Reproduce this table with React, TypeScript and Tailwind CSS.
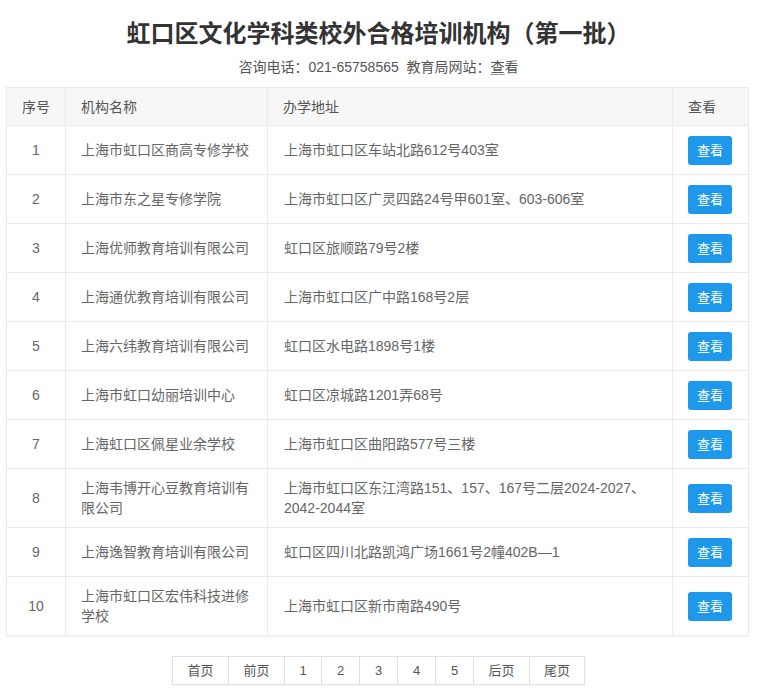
import React from "react";

const rows: { n: string; name: React.ReactNode; addr: React.ReactNode }[] = [
  { n: "1", name: "上海市虹口区商高专修学校", addr: "上海市虹口区车站北路612号403室" },
  { n: "2", name: "上海市东之星专修学院", addr: "上海市虹口区广灵四路24号甲601室、603-606室" },
  { n: "3", name: "上海优师教育培训有限公司", addr: "虹口区旅顺路79号2楼" },
  { n: "4", name: "上海通优教育培训有限公司", addr: "上海市虹口区广中路168号2层" },
  { n: "5", name: "上海六纬教育培训有限公司", addr: "虹口区水电路1898号1楼" },
  { n: "6", name: "上海市虹口幼丽培训中心", addr: "虹口区凉城路1201弄68号" },
  { n: "7", name: "上海虹口区佩星业余学校", addr: "上海市虹口区曲阳路577号三楼" },
  {
    n: "8",
    name: (
      <>
        上海韦博开心豆教育培训有
        <br />
        限公司
      </>
    ),
    addr: (
      <>
        上海市虹口区东江湾路151、157、167号二层2024-2027、
        <br />
        2042-2044室
      </>
    ),
  },
  { n: "9", name: "上海逸智教育培训有限公司", addr: "虹口区四川北路凯鸿广场1661号2幢402B—1" },
  {
    n: "10",
    name: (
      <>
        上海市虹口区宏伟科技进修
        <br />
        学校
      </>
    ),
    addr: "上海市虹口区新市南路490号",
  },
];

const pages: { label: string; w: string }[] = [
  { label: "首页", w: "w-[55px]" },
  { label: "前页", w: "w-[56px]" },
  { label: "1", w: "w-[37px]" },
  { label: "2", w: "w-[38px]" },
  { label: "3", w: "w-[38px]" },
  { label: "4", w: "w-[38px]" },
  { label: "5", w: "w-[38px]" },
  { label: "后页", w: "w-[56px]" },
  { label: "尾页", w: "w-[55px]" },
];

export default function App() {
  return (
    <div
      className="w-[757px] h-[698px] bg-white overflow-hidden pt-[18px]"
      style={{ fontFamily: '"Liberation Sans", "Noto Sans CJK SC", sans-serif' }}
    >
      <h1 className="text-center text-[24px] leading-[32px] font-bold text-[#333]">
        虹口区文化学科类校外合格培训机构（第一批）
      </h1>
      <div className="mt-[7px] text-center text-[14px] leading-[20px] text-[#555]">
        咨询电话：021-65758565&nbsp;&nbsp;教育局网站：<span className="underline underline-offset-2 decoration-[#999]">查</span>看
      </div>
      <div className="mt-[10px] ml-[6px] w-[742px]">
        <table className="w-full table-fixed border-collapse border border-[#ebebeb] shadow-[0_1px_2px_rgba(0,0,0,0.05)] text-[14px] leading-[20px] text-[#666]">
          <colgroup>
            <col className="w-[59px]" />
            <col className="w-[202px]" />
            <col className="w-[405px]" />
            <col className="w-[76px]" />
          </colgroup>
          <thead>
            <tr className="h-[38px] bg-[#f7f7f7] text-[#555]">
              <th className="border border-[#ebebeb] font-normal text-center">序号</th>
              <th className="border border-[#ebebeb] font-normal text-left pl-[15px]">机构名称</th>
              <th className="border border-[#ebebeb] font-normal text-left pl-[15px]">办学地址</th>
              <th className="border border-[#ebebeb] font-normal text-left pl-[15px]">查看</th>
            </tr>
          </thead>
          <tbody>
            {rows.map((r) => (
              <tr key={r.n} className="h-[49px]">
                <td className="border border-[#ebebeb] text-center align-middle py-[9px]">{r.n}</td>
                <td className="border border-[#ebebeb] pl-[15px] pr-[4px] align-middle py-[9px] whitespace-nowrap">
                  {r.name}
                </td>
                <td className="border border-[#ebebeb] pl-[16px] pr-[4px] align-middle py-[9px] whitespace-nowrap">
                  {r.addr}
                </td>
                <td className="border border-[#ebebeb] pl-[15px] align-middle">
                  <button className="w-[44px] h-[29px] rounded-[3px] bg-[#1e98ea] text-white text-[13px] leading-[29px] text-center">
                    查看
                  </button>
                </td>
              </tr>
            ))}
          </tbody>
        </table>
      </div>
      <div className="mt-[20px] flex justify-center">
        <div className="flex border border-[#e0e0e0] shadow-[0_1px_2px_rgba(0,0,0,0.04)]">
          {pages.map((p, i) => (
            <div
              key={p.label}
              className={`${p.w} h-[27px] flex items-center justify-center text-[13px] text-[#555] ${
                i > 0 ? "border-l border-[#e0e0e0]" : ""
              }`}
            >
              {p.label}
            </div>
          ))}
        </div>
      </div>
    </div>
  );
}
